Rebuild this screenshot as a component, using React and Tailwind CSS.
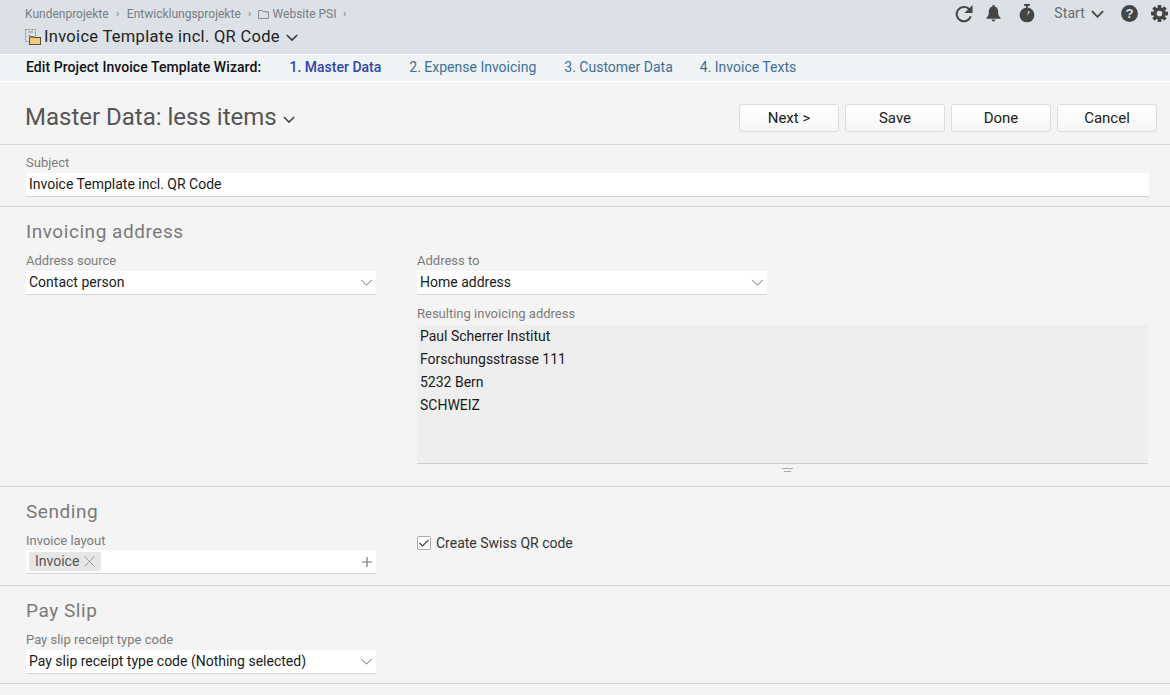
import React from "react";

const Chev = ({ className = "", sw = 1 }) => (
  <svg viewBox="0 0 14 8" className={className} fill="none" stroke="currentColor" strokeWidth={sw}>
    <path d="M1 1l6 6 6-6" />
  </svg>
);

const Select = ({ children, className = "w-[350px]" }) => (
  <div className={`${className} mt-[2px] h-6 bg-white border-b border-[#d4d4d4] flex items-center justify-between pl-[3px] pr-[3px] text-[14px] text-[#1a1a1a]`}>
    <span>{children}</span>
    <Chev className="w-[13px] h-[7px] text-[#555]" />
  </div>
);

const Label = ({ children, className = "" }) => (
  <div className={`text-[13px] leading-[16px] text-[#7b7b7b] ${className}`}>{children}</div>
);

const Heading = ({ children }) => (
  <div className="text-[19px] leading-[26px] text-[#7a7a7a] tracking-[0.55px]">{children}</div>
);

const Button = ({ children }) => (
  <div className="w-[100px] h-[28px] pt-[1px] rounded-[3px] border border-[#dcdcdc] bg-gradient-to-b from-white to-[#f6f6f6] flex items-center justify-center text-[15px] text-[#222]">
    {children}
  </div>
);

export default function App() {
  return (
    <div className="w-[1170px] h-[695px] overflow-hidden bg-[#f4f4f4] [font-family:Roboto,sans-serif]">
      {/* top header */}
      <div className="h-[54px] bg-[#dce1e7] flex justify-between pl-[25px] pr-[2px]">
        <div>
          <div className="flex items-center h-[14px] mt-[7px] text-[12px] text-[#777d84]">
            <span>Kundenprojekte</span>
            <span className="mx-[7.5px] text-[11px]">›</span>
            <span>Entwicklungsprojekte</span>
            <span className="mx-[7px] text-[11px]">›</span>
            <svg viewBox="0 0 12 10" className="w-[11px] h-[9px] mr-[3.5px]" fill="none" stroke="#808080" strokeWidth="1">
              <path d="M.5 9.5v-9h4l1 1.5h6v7.5z" />
            </svg>
            <span>Website PSI</span>
            <span className="ml-[6.5px] text-[11px]">›</span>
          </div>
          <div className="flex items-center mt-[6px] h-[20px]">
            <svg viewBox="0 0 16 16" className="w-4 h-4 mr-[3px]">
              <rect x="0.5" y="0.5" width="10" height="12" fill="none" stroke="#a08a6c" strokeDasharray="2 1" />
              <path d="M3 3h5M3 6l4 2" stroke="#9b8c78" fill="none" />
              <rect x="4.5" y="8.5" width="11" height="7" fill="#f3c97f" stroke="#5c5036" />
              <rect x="4" y="7" width="5" height="2" fill="#8d7a55" />
            </svg>
            <span className="text-[16.5px] text-[#222] tracking-[0.3px]">Invoice Template incl. QR Code</span>
            <Chev className="w-[12px] h-[7px] ml-[6px] text-[#333]" sw={1.8} />
          </div>
        </div>
        <div className="flex items-start h-[28px] pt-[4px] text-[#444]">
          <svg viewBox="0 0 20 20" className="w-[18px] h-[18px] mt-[1px]" fill="none" stroke="#454545" strokeWidth="2.2">
            <path d="M17.500 12.500a8 8 0 1 1-1.900-8l2 2.100" />
            <path d="M19.500 0v9h-9z" fill="#454545" stroke="none" />
          </svg>
          <svg viewBox="0 0 16 18" className="w-[15px] h-[17px] ml-[13px] mt-[1px]" fill="#454545">
            <path d="M8 0a1.3 1.3 0 0 1 1.3 1.5C12 2.2 13 4.600 13 7c0 4 1 5 2.500 6.500v1H.5v-1C2 12 3 11 3 7c0-2.400 1-4.800 3.700-5.500A1.300 1.300 0 0 1 8 0zM6 15.500h4a2 2 0 0 1-4 0z" />
          </svg>
          <svg viewBox="0 0 16 20" className="w-[16px] h-[19px] ml-[18px]">
            <rect x="5" y="0" width="6" height="2" fill="#454545" />
            <rect x="7" y="1" width="2" height="3" fill="#454545" />
            <circle cx="8" cy="11.500" r="7.800" fill="#454545" />
            <path d="M8 12l1.500-5 1.500 1.500z" fill="#dce1e7" />
          </svg>
          <span className="ml-[19px] text-[14px] leading-[19px] text-[#666b70] tracking-[0.1px]">Start</span>
          <Chev className="w-[13px] h-[8px] ml-[6px] mt-[6px] text-[#444]" sw={2} />
          <svg viewBox="0 0 18 18" className="w-[17px] h-[17px] ml-[17px] mt-[1px]">
            <circle cx="9" cy="9" r="8.900" fill="#454545" />
            <text x="9" y="14" textAnchor="middle" fontSize="14" fontWeight="700" fill="#dce1e7" fontFamily="'Liberation Sans',sans-serif">?</text>
          </svg>
          <svg viewBox="0 0 18 18" className="w-[17px] h-[17px] ml-[13px] mt-[1px]">
            <g fill="#454545">
              <circle cx="9" cy="9" r="6.300" />
              <rect x="7" y="0" width="4" height="18" rx="0.800" />
              <rect x="7" y="0" width="4" height="18" rx="0.800" transform="rotate(45 9 9)" />
              <rect x="7" y="0" width="4" height="18" rx="0.800" transform="rotate(90 9 9)" />
              <rect x="7" y="0" width="4" height="18" rx="0.800" transform="rotate(135 9 9)" />
            </g>
            <circle cx="9" cy="9" r="3" fill="#dce1e7" />
          </svg>
        </div>
      </div>

      {/* wizard bar */}
      <div className="h-[28px] border-y border-white bg-[#eff3f6] flex items-center pl-[26px] pb-[1px] text-[14px] text-[#3f6f94]">
        <span className="font-medium text-[#111] w-[263.5px] tracking-[0.07px]">Edit Project Invoice Template Wizard:</span>
        <span className="font-medium text-[#2f45a8]">1. Master Data</span>
        <span className="ml-[28px]">2. Expense Invoicing</span>
        <span className="ml-[28px]">3. Customer Data</span>
        <span className="ml-[27px]">4. Invoice Texts</span>
      </div>

      {/* title row */}
      <div className="h-[63px] border-b border-[#d8d8d8] flex items-center justify-between pl-[25px] pr-[13px] pt-[9px]">
        <div className="flex items-center -mt-[2px]">
          <span className="text-[24px] text-[#555]">Master Data: less items</span>
          <Chev className="w-[12px] h-[7px] ml-[6px] mt-[5px] text-[#444]" sw={1.8} />
        </div>
        <div className="flex gap-[6px]">
          <Button>Next &gt;</Button>
          <Button>Save</Button>
          <Button>Done</Button>
          <Button>Cancel</Button>
        </div>
      </div>

      {/* subject */}
      <div className="h-[62px] border-b border-[#d8d8d8] pl-[26px] pr-[21px] pt-[10px]">
        <Label>Subject</Label>
        <div className="mt-[2px] h-6 bg-white border-b border-[#d4d4d4] flex items-center pl-[3px] text-[14px] text-[#1a1a1a]">
          Invoice Template incl. QR Code
        </div>
      </div>

      {/* invoicing address */}
      <div className="h-[280px] border-b border-[#d8d8d8] pl-[26px] pr-[22px] pt-[12px] flex flex-col">
        <Heading>Invoicing address</Heading>
        <div className="flex mt-[8px]">
          <div className="w-[391px]">
            <Label>Address source</Label>
            <Select>Contact person</Select>
          </div>
          <div className="flex-1">
            <Label>Address to</Label>
            <Select>Home address</Select>
            <Label className="mt-[11px] mb-[3px]">Resulting invoicing address</Label>
            <div className="h-[139px] bg-[#eeeeee] border-b border-[#cfcfcf] pl-[3px] text-[14px] leading-[23px] text-[#1a1a1a]">
              <div>Paul Scherrer Institut</div>
              <div>Forschungsstrasse 111</div>
              <div>5232 Bern</div>
              <div>SCHWEIZ</div>
            </div>
            <svg viewBox="0 0 11 4" className="w-[11px] h-[4px] mt-[4px] ml-[365px]" stroke="#aaa" strokeWidth="1" fill="none">
              <path d="M0 .5h11M2 3.500h7" />
            </svg>
          </div>
        </div>
      </div>

      {/* sending */}
      <div className="h-[99px] border-b border-[#d8d8d8] pl-[26px] pt-[12px]">
        <Heading>Sending</Heading>
        <div className="flex mt-[8px]">
          <div className="w-[391px]">
            <Label>Invoice layout</Label>
            <div className="w-[350px] mt-[1px] h-6 bg-white border-b border-[#d4d4d4] flex items-center justify-between pl-[3px] pr-[4px]">
              <div className="h-[19px] bg-[#e6e6e6] rounded-[2px] flex items-center pl-[6px] pr-[6px] text-[14px] text-[#555]">
                Invoice
                <svg viewBox="0 0 10 10" className="w-[11px] h-[11px] ml-[5px]" stroke="#999" strokeWidth="0.900" fill="none">
                  <path d="M.5.5l9 9M9.500.500l-9 9" />
                </svg>
              </div>
              <svg viewBox="0 0 10 10" className="w-[10px] h-[10px]" stroke="#777" strokeWidth="1.200" fill="none">
                <path d="M0 5h10M5 0v10" />
              </svg>
            </div>
          </div>
          <div className="flex items-center h-[14px] mt-[3px]">
            <div className="w-[14px] h-[14px] bg-white border border-[#aaa] rounded-[2px] flex items-center justify-center">
              <svg viewBox="0 0 10 8" className="w-[10px] h-[8px]" stroke="#444" strokeWidth="1.200" fill="none">
                <path d="M.5 4l3 3L9.500 1" />
              </svg>
            </div>
            <span className="ml-[5px] text-[14px] text-[#333]">Create Swiss QR code</span>
          </div>
        </div>
      </div>

      {/* pay slip */}
      <div className="h-[98px] border-b border-[#d8d8d8] pl-[26px] pt-[12px]">
        <Heading>Pay Slip</Heading>
        <Label className="mt-[8px]">Pay slip receipt type code</Label>
        <Select>Pay slip receipt type code (Nothing selected)</Select>
      </div>
    </div>
  );
}
